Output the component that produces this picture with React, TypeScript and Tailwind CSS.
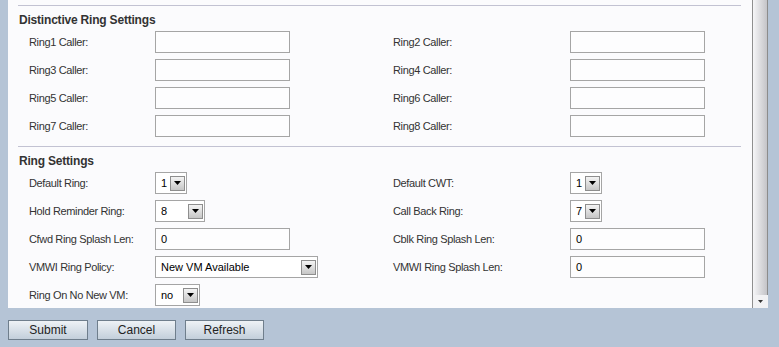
import React from "react";

const FONT = { fontFamily: '"Liberation Sans", Arial, sans-serif' };

function Arrow() {
  return (
    <span className="flex h-[15px] w-[15px] items-center justify-center border border-[#8e8e8e] bg-gradient-to-b from-[#f4f4f4] to-[#c6c6c6]">
      <svg width="7" height="4" viewBox="0 0 7 4">
        <polygon points="0,0 7,0 3.5,4" fill="#000" />
      </svg>
    </span>
  );
}

function Select({ cls, value }: { cls: string; value: string }) {
  return (
    <div
      className={`flex h-[22px] items-center justify-between border border-[#a5a5a5] bg-white pl-[5px] pr-[1px] text-[11px] text-black ${cls}`}
    >
      <span>{value}</span>
      <Arrow />
    </div>
  );
}

function Input({ value = "" }: { value?: string }) {
  return (
    <div className="flex h-[22px] w-[135px] items-center border border-[#a5a5a5] bg-[#fdfdfe] pl-[5px] text-[11px] text-black">
      {value}
    </div>
  );
}

function Label({ text, cls }: { text: string; cls: string }) {
  return (
    <div className={`shrink-0 text-[11px] tracking-[-0.35px] text-[#333] ${cls}`}>{text}</div>
  );
}

function Row({
  l1,
  c1,
  l2,
  c2,
}: {
  l1: string;
  c1: React.ReactNode;
  l2?: string;
  c2?: React.ReactNode;
}) {
  return (
    <div className="flex h-[28px] items-center pl-[11px]">
      <Label text={l1} cls="w-[126px]" />
      <div className="w-[238px] shrink-0">{c1}</div>
      {l2 && <Label text={l2} cls="w-[177px]" />}
      {c2 && <div className="shrink-0">{c2}</div>}
    </div>
  );
}

function Heading({ text }: { text: string }) {
  return (
    <div className="mt-[6px] h-[16px] pl-[1px] text-[12px] font-bold leading-[16px] tracking-[-0.2px] text-[#333]">
      {text}
    </div>
  );
}

function Button({ text, cls }: { text: string; cls: string }) {
  return (
    <div
      className={`flex h-[20px] items-center justify-center border border-[#6f7e8c] bg-gradient-to-b from-[#eef2f6] to-[#c3cfdb] text-[12px] text-[#222] ${cls}`}
    >
      {text}
    </div>
  );
}

export default function App() {
  return (
    <div className="flex h-[347px] w-[779px] flex-col bg-[#b5c4d6]" style={FONT}>
      <div className="flex h-[308px] shrink-0">
        <div className="w-[8px] shrink-0" />
        <div className="h-[308px] w-[744px] shrink-0 overflow-hidden bg-[#fbfbfd] pl-[10px] pr-[11px] pt-[5px]">
          <div className="border-t border-[#c2c2d2]">
            <Heading text="Distinctive Ring Settings" />
            <Row l1="Ring1 Caller:" c1={<Input />} l2="Ring2 Caller:" c2={<Input />} />
            <Row l1="Ring3 Caller:" c1={<Input />} l2="Ring4 Caller:" c2={<Input />} />
            <Row l1="Ring5 Caller:" c1={<Input />} l2="Ring6 Caller:" c2={<Input />} />
            <Row l1="Ring7 Caller:" c1={<Input />} l2="Ring8 Caller:" c2={<Input />} />
          </div>
          <div className="mt-[6px] border-t border-[#c2c2d2]">
            <Heading text="Ring Settings" />
            <Row
              l1="Default Ring:"
              c1={<Select cls="w-[32px]" value="1" />}
              l2="Default CWT:"
              c2={<Select cls="w-[32px]" value="1" />}
            />
            <Row
              l1="Hold Reminder Ring:"
              c1={<Select cls="w-[50px]" value="8" />}
              l2="Call Back Ring:"
              c2={<Select cls="w-[32px]" value="7" />}
            />
            <Row
              l1="Cfwd Ring Splash Len:"
              c1={<Input value="0" />}
              l2="Cblk Ring Splash Len:"
              c2={<Input value="0" />}
            />
            <Row
              l1="VMWI Ring Policy:"
              c1={<Select cls="w-[163px]" value="New VM Available" />}
              l2="VMWI Ring Splash Len:"
              c2={<Input value="0" />}
            />
            <Row l1="Ring On No New VM:" c1={<Select cls="w-[45px]" value="no" />} />
          </div>
        </div>
        <div className="flex h-[308px] w-[16px] shrink-0 flex-col border-l border-[#8f8f8f] bg-[#f2f2f4]">
          <div className="flex-1 border-r border-[#8c8c8c] bg-gradient-to-r from-[#f6f6f8] to-[#c4c4c8]" />
          <div className="flex h-[13px] items-center justify-center">
            <svg width="5" height="3" viewBox="0 0 5 3">
              <polygon points="0,0 5,0 2.5,3" fill="#333" />
            </svg>
          </div>
        </div>
      </div>
      <div className="flex gap-[9px] pl-[8px] pt-[12px]">
        <Button text="Submit" cls="w-[80px]" />
        <Button text="Cancel" cls="w-[79px]" />
        <Button text="Refresh" cls="w-[79px]" />
      </div>
    </div>
  );
}
